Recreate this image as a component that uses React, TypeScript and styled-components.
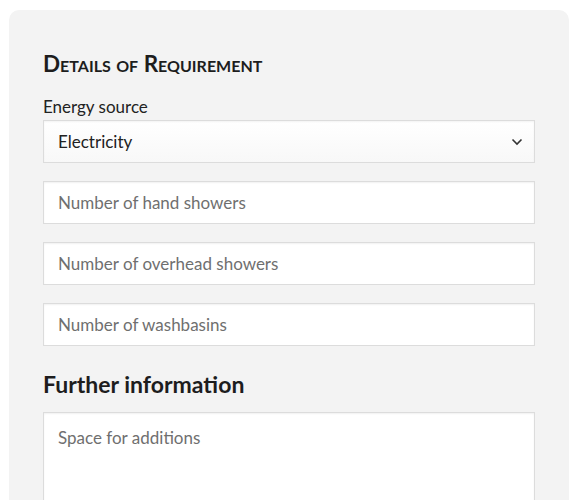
import styled, { createGlobalStyle } from "styled-components";

const GlobalStyle = createGlobalStyle`
  html, body {
    margin: 0;
    padding: 0;
    background: #ffffff;
    font-family: Lato, "Open Sans", sans-serif;
  }
`;

const Page = styled.div`
  padding: 10px 10px 0 9px;
`;

const Panel = styled.form`
  background: #f3f3f3;
  border-radius: 10px 10px 0 0;
  padding: 39px 34px 40px 34px;
  display: flex;
  flex-direction: column;
`;

const Title = styled.h2`
  margin: 0 0 17px 0;
  font-size: 22.5px;
  line-height: 30px;
  font-weight: 700;
  font-variant: small-caps;
  color: #1d1d1d;
`;

const Label = styled.label`
  font-size: 17px;
  line-height: 22px;
  color: #222;
  margin-bottom: 2px;
`;

const SelectWrap = styled.div`
  position: relative;
  margin-bottom: 18px;
`;

const Select = styled.select`
  appearance: none;
  width: 100%;
  height: 43px;
  box-sizing: border-box;
  border: 1px solid #dcdcdc;
  border-radius: 0;
  background: linear-gradient(#ffffff, #f8f8f8);
  box-shadow: inset 0 1px 2px rgba(0, 0, 0, 0.05);
  padding: 0 14px;
  font-family: inherit;
  font-size: 17px;
  color: #222;
  outline: none;
`;

const Chevron = styled.svg`
  position: absolute;
  right: 12px;
  top: 18px;
  pointer-events: none;
`;

const Field = styled.input`
  width: 100%;
  height: 43px;
  box-sizing: border-box;
  border: 1px solid #dcdcdc;
  border-radius: 0;
  background: #ffffff;
  box-shadow: inset 0 1px 2px rgba(0, 0, 0, 0.06);
  padding: 0 14px;
  margin-bottom: 18px;
  font-family: inherit;
  font-size: 17px;
  color: #222;
  outline: none;
  &::placeholder {
    color: #6f6f6f;
  }
`;

const SubTitle = styled.h3`
  margin: 6px 0 13px 0;
  font-size: 23px;
  line-height: 29px;
  font-weight: 700;
  color: #1d1d1d;
`;

const Notes = styled.textarea`
  width: 100%;
  height: 130px;
  box-sizing: border-box;
  border: 1px solid #dcdcdc;
  border-radius: 0;
  background: #ffffff;
  box-shadow: inset 0 1px 2px rgba(0, 0, 0, 0.06);
  padding: 14px 14px;
  font-family: inherit;
  font-size: 17px;
  color: #222;
  resize: none;
  outline: none;
  &::placeholder {
    color: #6f6f6f;
  }
`;

export default function App() {
  return (
    <>
      <GlobalStyle />
      <Page>
        <Panel>
          <Title>Details of Requirement</Title>
          <Label htmlFor="energy">Energy source</Label>
          <SelectWrap>
            <Select id="energy" defaultValue="electricity">
              <option value="electricity">Electricity</option>
              <option value="gas">Gas</option>
            </Select>
            <Chevron width="12" height="8" viewBox="0 0 12 8">
              <path d="M1.5 1.5 L6 6 L10.5 1.5" fill="none" stroke="#333" strokeWidth="1.6" />
            </Chevron>
          </SelectWrap>
          <Field placeholder="Number of hand showers" />
          <Field placeholder="Number of overhead showers" />
          <Field placeholder="Number of washbasins" />
          <SubTitle>Further information</SubTitle>
          <Notes placeholder="Space for additions" />
        </Panel>
      </Page>
    </>
  );
}
